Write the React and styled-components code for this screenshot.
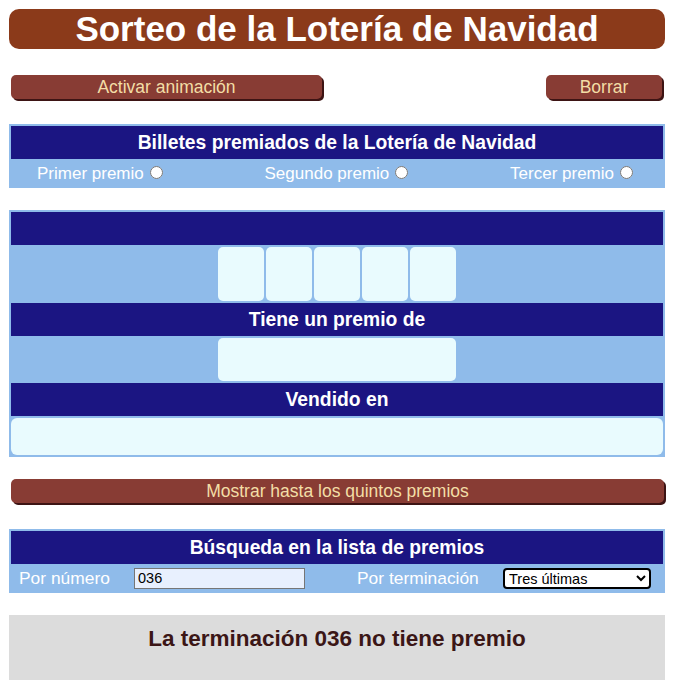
import styled, { createGlobalStyle } from "styled-components";

const GlobalStyle = createGlobalStyle`
  body {
    margin: 0;
    background: #ffffff;
    font-family: "Liberation Sans", Arial, sans-serif;
  }
`;

const digits = [0, 1, 2, 3, 4];
const prizes = ["Primer premio", "Segundo premio", "Tercer premio"];

const App = () => {
  return (
    <Page>
      <GlobalStyle />
      <Title>Sorteo de la Lotería de Navidad</Title>

      <ButtonRow>
        <Button width="311px">Activar animación</Button>
        <Button width="116px">Borrar</Button>
      </ButtonRow>

      <Panel>
        <Header>Billetes premiados de la Lotería de Navidad</Header>
        <RadioRow>
          {prizes.map((p) => (
            <RadioLabel key={p}>
              {p}
              <Radio type="radio" name="premio" />
            </RadioLabel>
          ))}
        </RadioRow>
      </Panel>

      <Panel spaced>
        <Header />
        <BoxRow>
          <Digits>
            {digits.map((d) => (
              <Digit key={d} />
            ))}
          </Digits>
        </BoxRow>
        <Header>Tiene un premio de</Header>
        <BoxRow>
          <PrizeBox />
        </BoxRow>
        <Header>Vendido en</Header>
        <WideBox />
      </Panel>

      <Button width="653px" wide>
        Mostrar hasta los quintos premios
      </Button>

      <Panel search>
        <Header>Búsqueda en la lista de premios</Header>
        <SearchRow>
          <SearchLabel>Por número</SearchLabel>
          <NumberInput defaultValue="036" />
          <SearchLabel right>Por terminación</SearchLabel>
          <Select defaultValue="3">
            <option value="3">Tres últimas</option>
            <option value="2">Dos últimas</option>
            <option value="1">Última</option>
          </Select>
        </SearchRow>
      </Panel>

      <Result>La terminación 036 no tiene premio</Result>
    </Page>
  );
};

export default App;

const Page = styled.div`
  width: 656px;
  margin-left: 9px;
  padding-top: 9px;
  display: flex;
  flex-direction: column;
`;

const Title = styled.h1`
  margin: 0;
  height: 40px;
  background-color: #8b3a1a;
  border-radius: 10px;
  color: #ffffff;
  font-size: 35px;
  font-weight: bold;
  line-height: 40px;
  text-align: center;
`;

const ButtonRow = styled.div`
  display: flex;
  justify-content: space-between;
  padding: 0 3px 0 2px;
  margin-top: 26px;
`;

const Button = styled.button`
  width: ${(p) => p.width};
  height: 24px;
  margin-left: ${(p) => (p.wide ? "2px" : "0")};
  margin-top: ${(p) => (p.wide ? "22px" : "0")};
  padding: 0;
  border: none;
  border-radius: 5px;
  background-color: #883c34;
  box-shadow: 2px 2px 0 #3d1414;
  color: #f3dea6;
  font-family: "Liberation Sans", Arial, sans-serif;
  font-size: 17.5px;
  line-height: 24px;
  text-align: center;
`;

const Panel = styled.div`
  margin-top: ${(p) => (p.spaced ? "22px" : p.search ? "26px" : "25px")};
  border: 2px solid #8fbbea;
  background-color: #8fbbea;
  display: flex;
  flex-direction: column;
  gap: ${(p) => (p.spaced ? "2px" : "0")};
`;

const Header = styled.div`
  height: 33px;
  background-color: #1b1582;
  color: #ffffff;
  font-size: 19.3px;
  font-weight: bold;
  line-height: 33px;
  text-align: center;
`;

const RadioRow = styled.div`
  height: 27px;
  display: flex;
  align-items: center;
  justify-content: space-between;
  padding: 3px 27px 0 26px;
  box-sizing: border-box;
`;

const RadioLabel = styled.label`
  display: flex;
  align-items: center;
  color: #ffffff;
  font-size: 17px;
`;

const Radio = styled.input`
  width: 13px;
  height: 13px;
  margin: -3px 3px 0 6px;
`;

const BoxRow = styled.div`
  display: flex;
  justify-content: center;
`;

const Digits = styled.div`
  display: flex;
  gap: 2px;
`;

const Digit = styled.div`
  width: 46px;
  height: 54px;
  border-radius: 5px;
  background-color: #e9fbfe;
`;

const PrizeBox = styled.div`
  width: 238px;
  height: 43px;
  border-radius: 5px;
  background-color: #e9fbfe;
`;

const WideBox = styled.div`
  height: 37px;
  border-radius: 6px;
  background-color: #e9fbfe;
`;

const SearchRow = styled.div`
  height: 27px;
  display: flex;
  align-items: center;
  padding: 1px 0 0 8px;
  box-sizing: border-box;
`;

const SearchLabel = styled.span`
  width: ${(p) => (p.right ? "146px" : "115px")};
  margin-left: ${(p) => (p.right ? "52px" : "0")};
  color: #ffffff;
  font-size: 17.4px;
`;

const NumberInput = styled.input`
  box-sizing: border-box;
  width: 171px;
  height: 21px;
  padding: 0 3px;
  border: 1px solid #767676;
  background-color: #e8f0fe;
  font-family: "Liberation Sans", Arial, sans-serif;
  font-size: 14.5px;
  color: #000000;
`;

const Select = styled.select`
  box-sizing: border-box;
  width: 148px;
  height: 21px;
  border: 2px solid #000000;
  border-radius: 4px;
  background-color: #ffffff;
  font-family: "Liberation Sans", Arial, sans-serif;
  font-size: 14.5px;
  color: #000000;
`;

const Result = styled.div`
  margin-top: 22px;
  height: 65px;
  background-color: #dcdcdc;
  color: #3b1616;
  font-size: 22.5px;
  font-weight: bold;
  text-align: center;
  padding-top: 11px;
  box-sizing: border-box;
`;
